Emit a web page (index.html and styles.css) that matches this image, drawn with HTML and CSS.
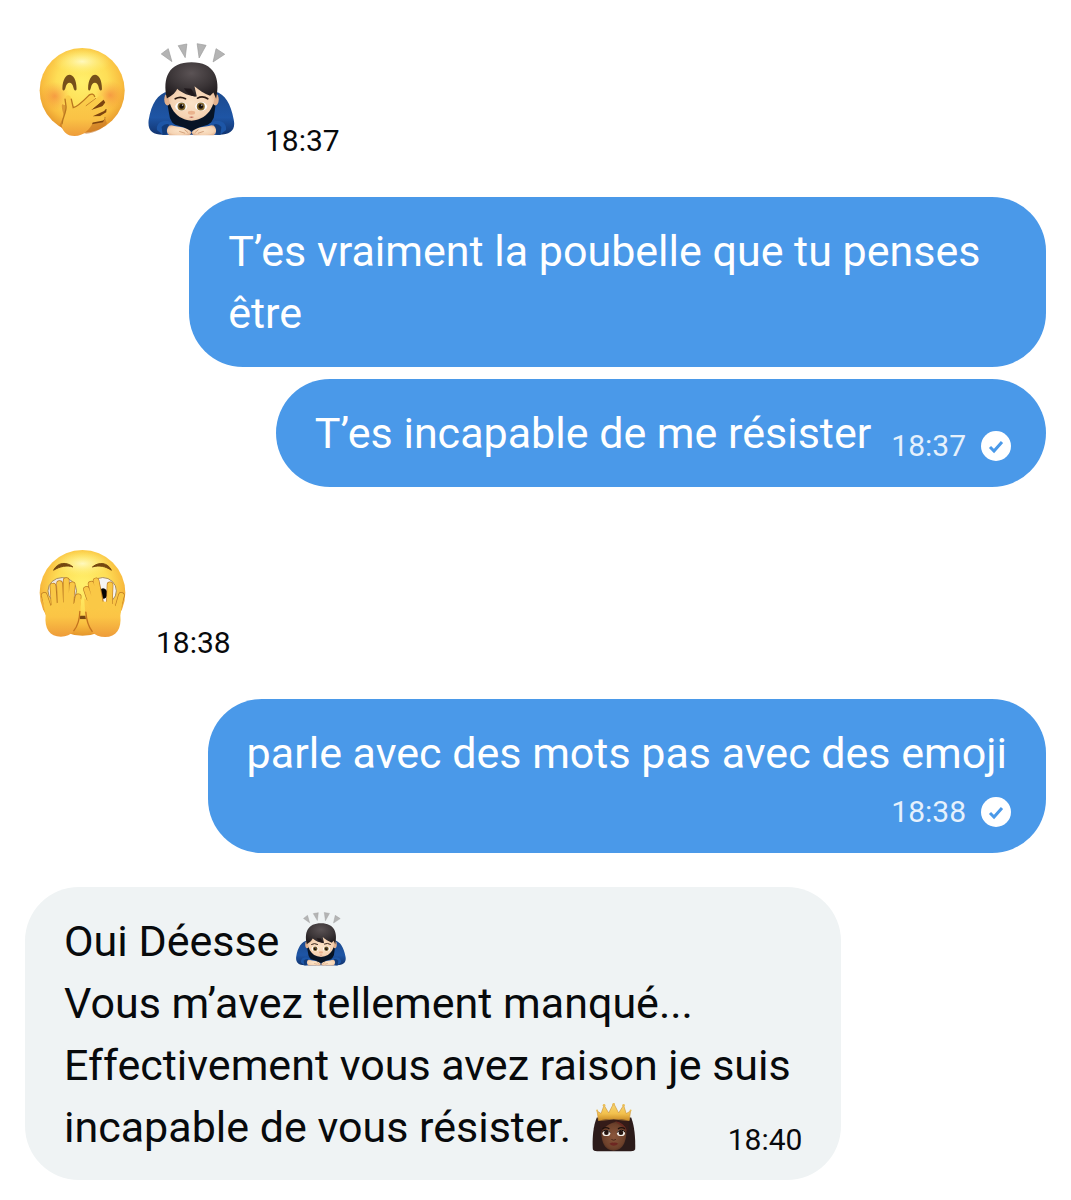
FILE: index.html
```html
<!DOCTYPE html>
<html lang="fr">
<head>
  <meta charset="UTF-8" />
  <meta name="viewport" content="width=device-width, initial-scale=1.0"/>
  <title>Messages</title>
  <link rel="stylesheet" href="styles.css">
</head>
<body>
  <!-- shared emoji and icon shapes -->
  <svg class="sprites" aria-hidden="true">
    <defs>
      <radialGradient id="face" cx="0.5" cy="0.4" r="0.6">
        <stop offset="0" stop-color="#fff06c"/>
        <stop offset="0.5" stop-color="#fede56"/>
        <stop offset="0.78" stop-color="#f9bd3f"/>
        <stop offset="1" stop-color="#e5962c"/>
      </radialGradient>
      <radialGradient id="shine">
        <stop offset="0" stop-color="#fffbc8" stop-opacity="0.9"/>
        <stop offset="1" stop-color="#fff27a" stop-opacity="0"/>
      </radialGradient>
      <radialGradient id="blush">
        <stop offset="0" stop-color="#f2783a" stop-opacity="0.6"/>
        <stop offset="1" stop-color="#f5903a" stop-opacity="0"/>
      </radialGradient>
      <linearGradient id="hand" x1="0" y1="0" x2="0" y2="1">
        <stop offset="0" stop-color="#fbd04c"/>
        <stop offset="0.6" stop-color="#fac245"/>
        <stop offset="1" stop-color="#ee9c3a"/>
      </linearGradient>
      <linearGradient id="palm" x1="0" y1="0" x2="0" y2="1">
        <stop offset="0" stop-color="#fccd48"/>
        <stop offset="0.5" stop-color="#fbc445"/>
        <stop offset="1" stop-color="#ee9c3a"/>
      </linearGradient>
      <radialGradient id="hair" cx="0.5" cy="0.3" r="0.7">
        <stop offset="0" stop-color="#5b5355"/>
        <stop offset="0.6" stop-color="#3b3537"/>
        <stop offset="1" stop-color="#211c1f"/>
      </radialGradient>
      <linearGradient id="shirt" x1="0" y1="0" x2="0" y2="1">
        <stop offset="0" stop-color="#1c4a8e"/>
        <stop offset="0.6" stop-color="#1e55a5"/>
        <stop offset="1" stop-color="#12346f"/>
      </linearGradient>
      <radialGradient id="skin" cx="0.5" cy="0.5" r="0.6">
        <stop offset="0" stop-color="#fbe3c8"/>
        <stop offset="0.7" stop-color="#f5d3b3"/>
        <stop offset="1" stop-color="#dfae8a"/>
      </radialGradient>
      <linearGradient id="gold" x1="0" y1="0" x2="0" y2="1">
        <stop offset="0" stop-color="#f7d873"/>
        <stop offset="0.6" stop-color="#f2c04d"/>
        <stop offset="1" stop-color="#c98a26"/>
      </linearGradient>
      <radialGradient id="brown" cx="0.5" cy="0.5" r="0.6">
        <stop offset="0" stop-color="#8b573c"/>
        <stop offset="0.7" stop-color="#6d412b"/>
        <stop offset="1" stop-color="#45261a"/>
      </radialGradient>
    </defs>

    <symbol id="emoji-giggle" viewBox="42 48 260 270">
      <circle cx="171" cy="180" r="129" fill="url(#face)"/>
      <ellipse cx="171" cy="92" rx="88" ry="38" fill="url(#shine)"/>
      <circle cx="88" cy="197" r="44" fill="url(#blush)"/>
      <circle cx="256" cy="194" r="44" fill="url(#blush)"/>
      <path d="M111 174C112 118 154 118 154 175C154 183 147 181 145 173C141 151 124 151 120 173C117 182 111 182 111 174Z" fill="#76501a"/>
      <path d="M189 174C190 118 231 118 231 175C231 183 224 181 222 173C218 151 201 151 197 173C195 182 189 182 189 174Z" fill="#76501a"/>
      <path d="M110 222C107 235 114 246 115 258L102 286L112 297L184 311C210 309 232 296 246 280L240 262Z" fill="#c26f20" opacity="0.55"/>
      <!-- gaps between the fingers -->
      <path d="M190 246L236 208L241 216L226 236L245 236L244 246L224 258L242 262L234 276L200 282Z" fill="#7d440f"/>
      <path d="M119 204C121 193 133 191 137 202L145 232L192 194C203 184 216 194 207 204L190 221L220 199C232 191 241 202 231 210L196 240L232 228C243 226 247 237 236 243L203 258L232 257C243 258 242 269 231 272L203 277C196 296 176 318 148 318C124 318 108 303 109 280C110 260 124 247 121 229Z" fill="url(#hand)"/>
      <path d="M119 206L122 228C124 246 111 261 110 281M138 206L144 232Q157 230 192 194Q204 186 209 198" fill="none" stroke="#b9771f" stroke-width="4" stroke-linecap="round"/>
      <path d="M183 226L212 204" stroke="#c78529" stroke-width="3" stroke-linecap="round"/>
    </symbol>

    <symbol id="emoji-bow" viewBox="38 38 260 280">
      <g fill="#b4b4b4" stroke="#9c9c9c" stroke-width="2" stroke-linejoin="round">
        <path d="M77 71L98 55L109 94Z"/>
        <path d="M128 46L154 41L149 82Z"/>
        <path d="M185 40L212 45L191 83Z"/>
        <path d="M242 55L268 72L233 95Z"/>
      </g>
      <path d="M98 184C67 190 47 220 39 270C35 303 53 315 84 314L252 314C285 314 302 300 295 268C286 220 269 192 239 184Z" fill="url(#shirt)"/>
      <path d="M94 214Q168 247 242 214L235 263L213 302H123L103 264Z" fill="#071426"/>
      <path d="M64 300C60 275 91 261 119 284L148 293L143 314H82Z" fill="#1d56a7"/>
      <path d="M272 300C276 275 245 261 217 284L188 293L193 314H254Z" fill="#1d56a7"/>
      <path d="M78 291Q88 279 101 283L93 314H81Z" fill="#123b79"/>
      <path d="M258 291Q248 279 235 283L243 314H255Z" fill="#123b79"/>
      <path d="M96 293Q101 282 116 288L140 292Q162 297 168 308L162 316H101Q90 307 96 293Z" fill="url(#skin)"/>
      <path d="M240 293Q235 282 220 288L196 292Q174 297 168 308L174 316H235Q246 307 240 293Z" fill="url(#skin)"/>
      <path d="M131 304L149 310M147 299L158 308M205 304L187 310M189 299L178 308" stroke="#d3a27c" stroke-width="3"/>
      <ellipse cx="96" cy="208" rx="10" ry="18" fill="#e2b18d"/>
      <ellipse cx="240" cy="208" rx="10" ry="18" fill="#e2b18d"/>
      <path d="M98 164H239C244 217 225 268 168 272C111 268 93 217 98 164Z" fill="url(#skin)"/>
      <path d="M94 205C80 143 99 96 168 96C237 96 256 144 242 206L234 187L224 197C207 190 190 180 177 168L184 199C161 198 140 190 125 176C117 193 105 198 94 205Z" fill="url(#hair)"/>
      <path d="M145 174Q156 195 181 200L167 176Z" fill="#20191c"/>
      <path d="M119 206Q134 197 150 206M186 204Q202 196 217 206" fill="none" stroke="#2d1c14" stroke-width="5" stroke-linecap="round"/>
      <ellipse cx="137" cy="229" rx="18" ry="13" fill="#fff"/>
      <ellipse cx="197" cy="229" rx="18" ry="13" fill="#fff"/>
      <circle cx="138" cy="229" r="12" fill="#866a31"/>
      <circle cx="196" cy="229" r="12" fill="#866a31"/>
      <circle cx="138" cy="229" r="7" fill="#17100c"/>
      <circle cx="196" cy="229" r="7" fill="#17100c"/>
      <circle cx="141" cy="225" r="2" fill="#fff"/>
      <circle cx="199" cy="225" r="2" fill="#fff"/>
      <ellipse cx="168" cy="248" rx="11" ry="6" fill="#eab38e"/>
      <path d="M160 261Q168 258 176 261Q168 266 160 261Z" fill="#c1665a"/>
    </symbol>

    <symbol id="emoji-peek" viewBox="40 42 262 264">
      <circle cx="171" cy="172" r="129" fill="url(#face)"/>
      <ellipse cx="171" cy="84" rx="88" ry="38" fill="url(#shine)"/>
      <path d="M84 104C96 79 124 78 142 94C126 88 102 92 84 104ZM201 94C220 78 247 80 258 104C240 92 222 88 201 94Z" fill="#74470f" stroke="#74470f" stroke-width="3" stroke-linejoin="round"/>
      <ellipse cx="110" cy="166" rx="43" ry="40" fill="#ece7e2" stroke="#a98d58" stroke-width="3"/>
      <ellipse cx="232" cy="166" rx="41" ry="40" fill="#f6f4f3" stroke="#a98d58" stroke-width="3"/>
      <ellipse cx="108" cy="172" rx="12" ry="17" fill="#473322"/>
      <ellipse cx="233" cy="174" rx="13" ry="16" fill="#050303"/>
      <path d="M156 246H188" stroke="#774612" stroke-width="10"/>
      <!-- left hand -->
      <g fill="none" stroke="#bd7c24" stroke-width="20" stroke-linecap="round">
        <path d="M56 180L70 222M82 152L86 210M102 144L105 206M122 135L122 206M140 148L135 208M158 184L150 230"/>
      </g>
      <path d="M50 186L60 240C56 279 72 304 106 304C138 304 160 282 164 242L167 188L140 208Q104 190 70 214Z" fill="url(#palm)"/>
      <g fill="none" stroke="#fac846" stroke-width="16" stroke-linecap="round">
        <path d="M56 180L70 222M82 152L86 212M102 144L105 212M122 135L122 212M140 148L135 212M158 184L150 230"/>
      </g>
      <!-- right hand -->
      <g fill="none" stroke="#bd7c24" stroke-width="20" stroke-linecap="round">
        <path d="M183 162L202 218M197 146L214 206M212 136L226 204M254 148L252 206M288 180L276 222"/>
      </g>
      <path d="M293 186L285 240C289 280 273 305 239 305C207 305 184 283 180 244L176 188L204 208Q240 186 274 214Z" fill="url(#palm)"/>
      <g fill="none" stroke="#fac846" stroke-width="16" stroke-linecap="round">
        <path d="M183 162L202 218M197 146L214 212M212 136L226 212M254 148L252 212M288 180L276 222"/>
      </g>
      <path d="M163 228Q162 264 145 286M181 230Q184 267 200 288" fill="none" stroke="#c4741e" stroke-width="4" stroke-linecap="round"/>
    </symbol>

    <symbol id="emoji-princess" viewBox="46 38 132 148">
      <path d="M60 82C49 108 46 145 48 178Q50 184 61 184H163Q174 184 176 178C177 145 174 108 164 82Z" fill="#2c1b1a"/>
      <path d="M76 95H147C154 133 148 182 111 182C74 182 69 133 76 95Z" fill="url(#brown)"/>
      <path d="M67 87H158L155 130C151 112 139 101 120 94C101 99 82 108 72 128Z" fill="#341b18"/>
      <path d="M114 92Q144 96 152 124Q136 104 114 92Z" fill="#6a2921"/>
      <path d="M77 116Q87 109 98 116M124 116Q135 109 145 116" fill="none" stroke="#1e100c" stroke-width="4"/>
      <ellipse cx="89" cy="129" rx="12" ry="9" fill="#f4eee8"/>
      <ellipse cx="133" cy="129" rx="12" ry="9" fill="#f4eee8"/>
      <circle cx="89" cy="128" r="7" fill="#24130e"/>
      <circle cx="133" cy="128" r="7" fill="#24130e"/>
      <path d="M76 126Q87 114 101 127M121 127Q134 114 146 126" fill="none" stroke="#130a09" stroke-width="3"/>
      <path d="M104 148Q111 153 118 148" fill="none" stroke="#4b291b" stroke-width="3"/>
      <path d="M98 161Q108 155 111 158Q115 155 125 161Q111 173 98 161Z" fill="#6e2722"/>
      <path d="M61 62L73 70L82 45L96 68L111 39L126 68L141 45L149 70L162 62L158 91Q111 82 65 91Z" fill="url(#gold)" stroke="#cf973d" stroke-width="2" stroke-linejoin="round"/>
      <g fill="#e9bd58">
        <circle cx="61" cy="61" r="3"/>
        <circle cx="82" cy="45" r="4"/>
        <circle cx="111" cy="42" r="4"/>
        <circle cx="141" cy="45" r="4"/>
        <circle cx="162" cy="61" r="3"/>
      </g>
    </symbol>

    <symbol id="icon-sent" viewBox="0 0 30 30">
      <circle cx="15" cy="15" r="15" fill="#fff"/>
      <path d="M9 16L13 20L21 11" fill="none" stroke="#4a99e9" stroke-width="3"/>
    </symbol>
  </svg>

  <main class="chat">
    <div class="message reaction">
      <svg class="emoji emoji-face" role="img" aria-label="Rire"><use href="#emoji-giggle"/></svg>
      <svg class="emoji emoji-person" role="img" aria-label="Révérence"><use href="#emoji-bow"/></svg>
      <time class="time">18:37</time>
    </div>

    <div class="message bubble sent">
      <p>T’es vraiment la poubelle que tu penses être</p>
    </div>

    <div class="message bubble sent grouped inline">
      <p>T’es incapable de me résister</p>
      <div class="meta">
        <time class="time">18:37</time>
        <svg class="check" role="img" aria-label="Envoyé"><use href="#icon-sent"/></svg>
      </div>
    </div>

    <div class="message reaction later">
      <svg class="emoji emoji-face" role="img" aria-label="Visage caché"><use href="#emoji-peek"/></svg>
      <time class="time">18:38</time>
    </div>

    <div class="message bubble sent stacked">
      <p>parle avec des mots pas avec des emoji</p>
      <div class="meta">
        <time class="time">18:38</time>
        <svg class="check" role="img" aria-label="Envoyé"><use href="#icon-sent"/></svg>
      </div>
    </div>

    <div class="message bubble received">
      <p>Oui Déesse <svg class="emoji-text" role="img" aria-label="Révérence"><use href="#emoji-bow"/></svg><br>
      Vous m’avez tellement manqué...<br>
      Effectivement vous avez raison je suis<br>
      incapable de vous résister. <svg class="emoji-text princess" role="img" aria-label="Princesse"><use href="#emoji-princess"/></svg><time class="time">18:40</time></p>
    </div>
  </main>
</body>
</html>
```
FILE: styles.css
```css
body {
  margin: 0;
  background: #fff;
  color: #080a0c;
  font-family: Roboto, "Liberation Sans", sans-serif;
  font-size: 43px;
  line-height: 62px;
}
p {
  margin: 0;
}
.sprites {
  position: absolute;
  width: 0;
  height: 0;
}
.chat {
  display: flex;
  flex-direction: column;
  align-items: flex-start;
  padding: 43px 25px 20px;
}
.message {
  margin-top: 38px;
}
.time {
  font-size: 30px;
  line-height: 36px;
}

/* emoji-only messages */
.reaction {
  display: flex;
  align-items: flex-end;
  padding-left: 14px;
}
.reaction:first-child {
  margin-top: 0;
}
.reaction.later {
  margin-top: 62px;
}
.reaction .time {
  margin-left: 30px;
}
.emoji {
  width: 87px;
  margin-bottom: 23px;
}
.emoji + .emoji {
  margin-left: 22px;
}
.emoji-face {
  height: 89px;
}
.emoji-person {
  height: 93px;
}

/* text bubbles */
.bubble {
  box-sizing: border-box;
  max-width: 80vw;
  padding: 23px 39px;
  border-radius: 54px;
}
.sent {
  align-self: flex-end;
  background: #4a99e9;
  color: #fff;
}
.grouped {
  margin-top: 12px;
}
.inline {
  display: flex;
  align-items: flex-end;
  gap: 20px;
}
.received {
  margin-top: 34px;
  padding-bottom: 22px;
  background: #eff3f4;
}
.received .time {
  display: inline-block;
  margin-left: 92px;
  vertical-align: bottom;
}
.emoji-text {
  width: 50px;
  height: 54px;
  margin-left: 6px;
  vertical-align: -10px;
}
.emoji-text.princess {
  width: 44px;
  height: 49px;
  margin-left: 10px;
}
.meta {
  display: flex;
  align-items: center;
  justify-content: flex-end;
  gap: 15px;
  margin-right: -4px;
  color: #e6f1fc;
}
.stacked .meta {
  margin-top: 10px;
}
.check {
  width: 30px;
  height: 30px;
}
```
